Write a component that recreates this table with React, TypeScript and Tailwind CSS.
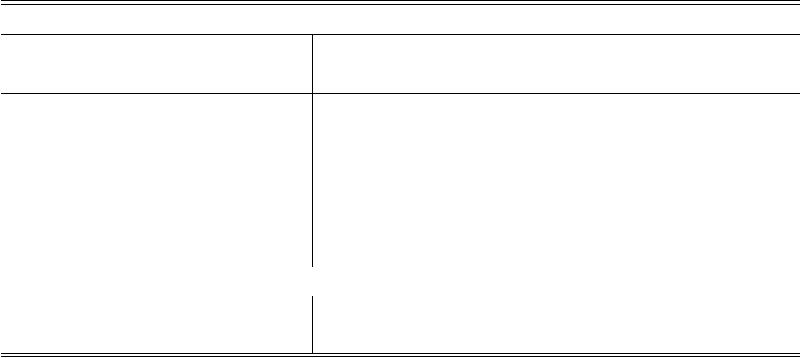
import React from 'react';

// Empty booktabs-style table: double rules top and bottom, one column divider.
const Rule: React.FC = () => <div className="h-px bg-black" />;

const Row: React.FC<{ h: string; divided?: boolean }> = ({ h, divided = true }) => (
  <div className={`flex ${h}`}>
    <div className="w-[311px]" />
    {divided && <div className="w-px bg-black" />}
    <div className="flex-1" />
  </div>
);

const App: React.FC = () => {
  return (
    <div className="w-[801px] h-[358px] bg-white overflow-hidden">
      <div className="ml-px w-[799px]">
        <Rule />
        <div className="h-[3px]" />
        <Rule />
        {/* header spans both columns */}
        <div className="h-[29px]" />
        <Rule />
        <Row h="h-[58px]" />
        <Rule />
        <Row h="h-[173px]" />
        <Row h="h-[29px]" divided={false} />
        <Row h="h-[57px]" />
        <Rule />
        <div className="h-[2px]" />
        <Rule />
      </div>
    </div>
  );
};

export default App;
